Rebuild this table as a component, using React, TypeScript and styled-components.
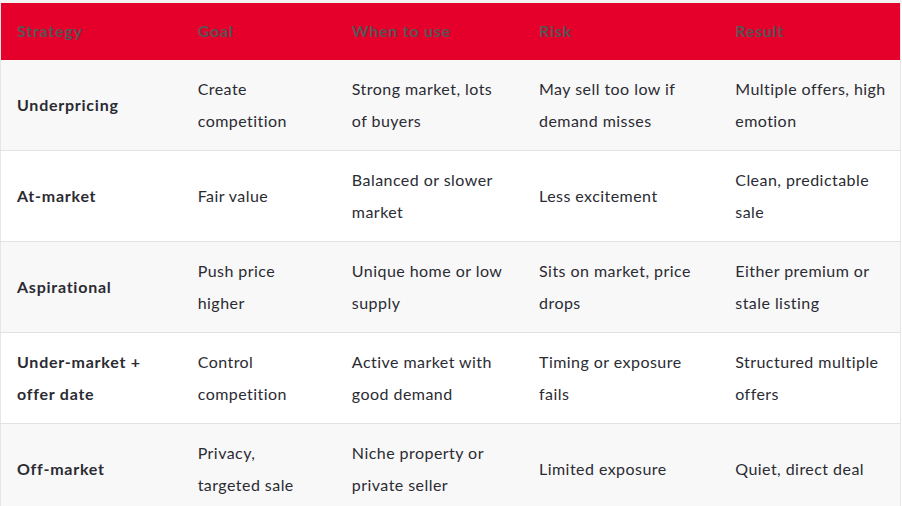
import React from "react";
import styled, { createGlobalStyle } from "styled-components";

const Global = createGlobalStyle`
  html, body { margin: 0; padding: 0; background: #ffffff; }
  body { font-family: Lato, "Open Sans", "Liberation Sans", sans-serif; }
`;

const Wrap = styled.div`
  width: 902px;
  border-top: 3px solid #f2f2f2;
`;

const Table = styled.table`
  width: 901px;
  table-layout: fixed;
  border-collapse: collapse;
  border-left: 1px solid #e6e6e6;
  border-right: 1px solid #e6e6e6;
  font-size: 16px;
  color: #2b2b33;
`;

const HeadCell = styled.th`
  background: #e5002c;
  color: #555555;
  font-weight: 700;
  text-align: left;
  height: 57px;
  padding: 0 16px 2px;
  box-sizing: border-box;
  vertical-align: middle;
  letter-spacing: 0.75px;
`;

const Row = styled.tr<{ $alt: boolean }>`
  background: ${(p) => (p.$alt ? "#f8f8f8" : "#ffffff")};
  border-bottom: 1px solid #e2e2e2;
`;

const Cell = styled.td<{ $strong?: boolean }>`
  padding: 13px 16px;
  height: 64px;
  line-height: 32px;
  vertical-align: middle;
  font-weight: ${(p) => (p.$strong ? 700 : 400)};
  letter-spacing: ${(p) => (p.$strong ? "0.75px" : "0.45px")};
  &:last-child {
    padding-right: 6px;
  }
`;

const widths = [181, 154, 187, 196, 181];
const headers = ["Strategy", "Goal", "When to use", "Risk", "Result"];
const rows = [
  ["Underpricing", "Create competition", "Strong market, lots of buyers", "May sell too low if demand misses", "Multiple offers, high emotion"],
  ["At-market", "Fair value", "Balanced or slower market", "Less excitement", "Clean, predictable sale"],
  ["Aspirational", "Push price higher", "Unique home or low supply", "Sits on market, price drops", "Either premium or stale listing"],
  ["Under-market + offer date", "Control competition", "Active market with good demand", "Timing or exposure fails", "Structured multiple offers"],
  ["Off-market", "Privacy, targeted sale", "Niche property or private seller", "Limited exposure", "Quiet, direct deal"],
];

export default function App() {
  return (
    <Wrap>
      <Global />
      <Table>
        <colgroup>
          {widths.map((w, i) => (
            <col key={i} style={{ width: w }} />
          ))}
        </colgroup>
        <thead>
          <tr>
            {headers.map((h) => (
              <HeadCell key={h}>{h}</HeadCell>
            ))}
          </tr>
        </thead>
        <tbody>
          {rows.map((r, i) => (
            <Row key={i} $alt={i % 2 === 0}>
              {r.map((c, j) => (
                <Cell key={j} $strong={j === 0}>
                  {c}
                </Cell>
              ))}
            </Row>
          ))}
        </tbody>
      </Table>
    </Wrap>
  );
}
